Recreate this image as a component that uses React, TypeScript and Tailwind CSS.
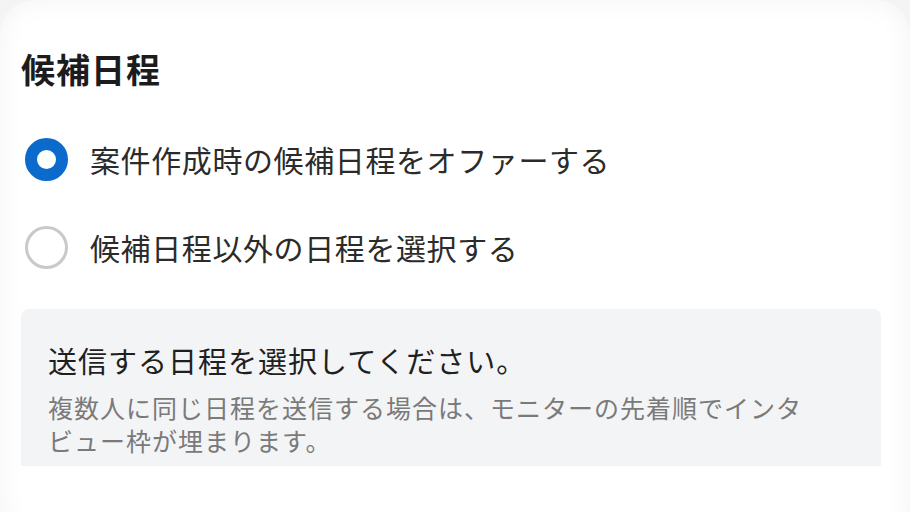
import React from "react";

export default function App() {
  const font = { fontFamily: '"Noto Sans CJK JP", "Noto Sans", sans-serif' };
  return (
    <div className="w-[910px] h-[512px] overflow-hidden bg-[#f4f4f4]" style={font}>
      <div className="w-[910px] h-[540px] rounded-[34px] bg-white shadow-[inset_0_0_28px_rgba(0,0,0,0.05)] pl-[21px] pr-[29px] pt-[45px]">
        <h2 className="text-[34px] leading-[48px] font-bold text-[#1c1c1c] tracking-[1px]">候補日程</h2>
        <div className="mt-[45px] flex flex-col gap-[45px]">
          <label className="flex items-center h-[43px] pl-[4px]">
            <span className="w-[43px] h-[43px] rounded-full border-[12.5px] border-[#0a6bcc] bg-white shrink-0" />
            <span className="ml-[22px] text-[30px] leading-[43px] text-[#2b2b2b] tracking-[0.6px]">案件作成時の候補日程をオファーする</span>
          </label>
          <label className="flex items-center h-[43px] pl-[4px]">
            <span className="w-[43px] h-[43px] rounded-full border-[3px] border-[#c9c9c9] bg-white shrink-0" />
            <span className="ml-[22px] text-[30px] leading-[43px] text-[#2b2b2b] tracking-[0.6px]">候補日程以外の日程を選択する</span>
          </label>
        </div>
        <div className="mt-[40px] h-[157px] rounded-t-[8px] bg-[#f3f4f6] pl-[27px] pr-[20px] pt-[32px]">
          <p className="text-[29px] leading-[38px] text-[#1f1f1f] tracking-[1px]">送信する日程を選択してください。</p>
          <p className="mt-[12px] text-[25px] leading-[33px] text-[#7a7a7a] tracking-[1px]">
            複数人に同じ日程を送信する場合は、モニターの先着順でインタ
            <br />
            ビュー枠が埋まります。
          </p>
        </div>
      </div>
    </div>
  );
}
